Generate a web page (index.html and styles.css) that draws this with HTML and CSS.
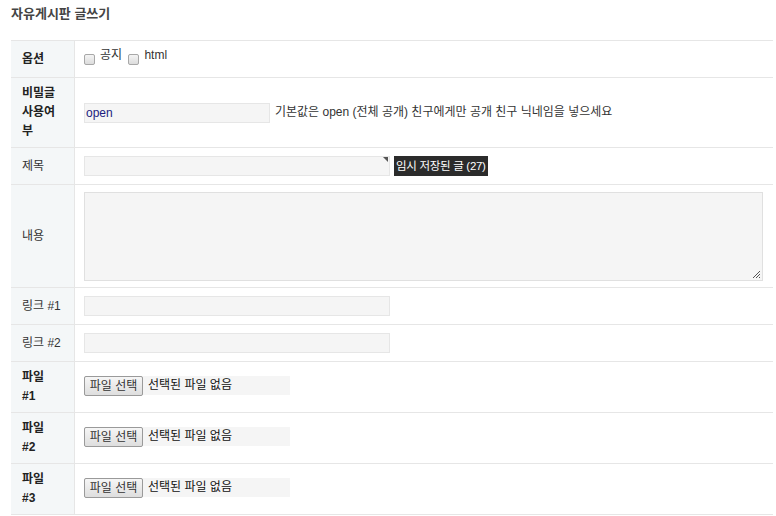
FILE: index.html
```html
<!DOCTYPE html>
<html lang="ko">
<head>
<meta charset="utf-8">
<link rel="stylesheet" href="styles.css">
</head>
<body>
<div class="page">
  <h1 class="title">자유게시판 글쓰기</h1>
  <table class="form">
    <tr class="r37">
      <th class="bold">옵션</th>
      <td>
        <label class="chk"><span class="box"></span>공지</label>
        <label class="chk"><span class="box"></span>html</label>
      </td>
    </tr>
    <tr class="r70">
      <th class="bold">비밀글<br>사용여<br>부</th>
      <td><span class="inp w186 open">open</span><span class="desc">기본값은 open (전체 공개) 친구에게만 공개 친구 닉네임을 넣으세요</span></td>
    </tr>
    <tr class="r37">
      <th>제목</th>
      <td><span class="inp w306 subj"><span class="corner"></span></span><span class="tip">임시 저장된 글 (27)</span></td>
    </tr>
    <tr class="r103">
      <th>내용</th>
      <td><div class="area"><svg class="grip" width="9" height="9" viewBox="0 0 9 9"><path d="M1 8L8 1M4 8L8 4M7 8L8 7" stroke="#555" stroke-width="1" fill="none"/></svg></div></td>
    </tr>
    <tr class="r37">
      <th>링크 #1</th>
      <td><span class="inp w306"></span></td>
    </tr>
    <tr class="r37">
      <th>링크 #2</th>
      <td><span class="inp w306"></span></td>
    </tr>
    <tr class="r51">
      <th class="bold">파일<br>#1</th>
      <td><span class="file"><span class="btn">파일 선택</span><span class="none">선택된 파일 없음</span></span></td>
    </tr>
    <tr class="r51">
      <th class="bold">파일<br>#2</th>
      <td><span class="file"><span class="btn">파일 선택</span><span class="none">선택된 파일 없음</span></span></td>
    </tr>
    <tr class="r51">
      <th class="bold">파일<br>#3</th>
      <td><span class="file"><span class="btn">파일 선택</span><span class="none">선택된 파일 없음</span></span></td>
    </tr>
  </table>
</div>
</body>
</html>
```

FILE: styles.css
```css
html, body { margin: 0; padding: 0; background: #fff; }
body {
  font-family: "Liberation Sans", "Noto Sans CJK KR", sans-serif;
  font-size: 12px;
  color: #333;
}
.page { padding: 4px 3px 0 11px; }
.title {
  margin: 0;
  font-size: 13px;
  font-weight: bold;
  color: #444;
  line-height: 20px;
  height: 36px;
}
.form {
  width: 762px;
  border-collapse: collapse;
  border-top: 1px solid #e6e6e6;
}
.form tr { border-bottom: 1px solid #e6e6e6; }
.form th {
  width: 52px;
  background: #f4f7f8;
  border-right: 1px solid #e6e6e6;
  text-align: left;
  padding: 0 0 0 11px;
  font-weight: normal;
  line-height: 19px;
  color: #333;
  vertical-align: middle;
}
.form th.bold { font-weight: bold; color: #222; }
.form td {
  padding: 0 0 0 9px;
  vertical-align: middle;
  line-height: 19px;
}
.r37 th, .r37 td { height: 36px; }
.r70 th, .r70 td { height: 69px; }
.r103 th, .r103 td { height: 102px; }
.r51 th, .r51 td { height: 50px; }

.chk { display: inline-flex; align-items: center; margin-right: 3px; position: relative; top: -3px; }
.chk .box {
  display: inline-block;
  width: 9px; height: 9px;
  border: 1px solid #a8a8a8;
  border-radius: 2px;
  background: linear-gradient(#f4f4f4, #dcdcdc);
  margin-right: 5px;
  position: relative; top: 4px;
}
.inp {
  display: inline-block;
  vertical-align: middle;
  height: 18px;
  background: #f5f5f5;
  border: 1px solid #e6e6e6;
  box-sizing: content-box;
}
.w186 { width: 184px; }
.w306 { width: 304px; }
.open { color: #1c1c80; padding-left: 1px; width: 183px; line-height: 18px; }
.desc { margin-left: 5px; vertical-align: middle; }
.subj { position: relative; }
.corner {
  position: absolute; right: 1px; top: 0;
  width: 0; height: 0;
  border-top: 5px solid #555;
  border-left: 5px solid transparent;
}
.tip {
  display: inline-block;
  vertical-align: middle;
  margin-left: 4px;
  background: #2b2b2b;
  color: #fff;
  height: 20px;
  line-height: 20px;
  padding: 0 2px;
  font-size: 11.5px;
  letter-spacing: -0.3px;
}
.area {
  width: 677px;
  height: 87px;
  background: #f5f5f5;
  border: 1px solid #e0e0e0;
  position: relative;
  margin-top: 1px;
}
.grip { position: absolute; right: 1px; bottom: 1px; }
.file {
  display: inline-flex;
  align-items: center;
  width: 206px;
  height: 19px;
  background: #f5f5f5;
  vertical-align: middle;
  position: relative;
  top: -2px;
}
.btn {
  display: inline-block;
  box-sizing: border-box;
  height: 20px;
  width: 59px;
  line-height: 18px;
  margin-top: 1px;
  text-align: center;
  border: 1px solid #9a9a9a;
  border-radius: 2px;
  background: linear-gradient(#f6f6f6, #dedede);
  color: #333;
}
.none { margin-left: 5px; color: #111; }
```
